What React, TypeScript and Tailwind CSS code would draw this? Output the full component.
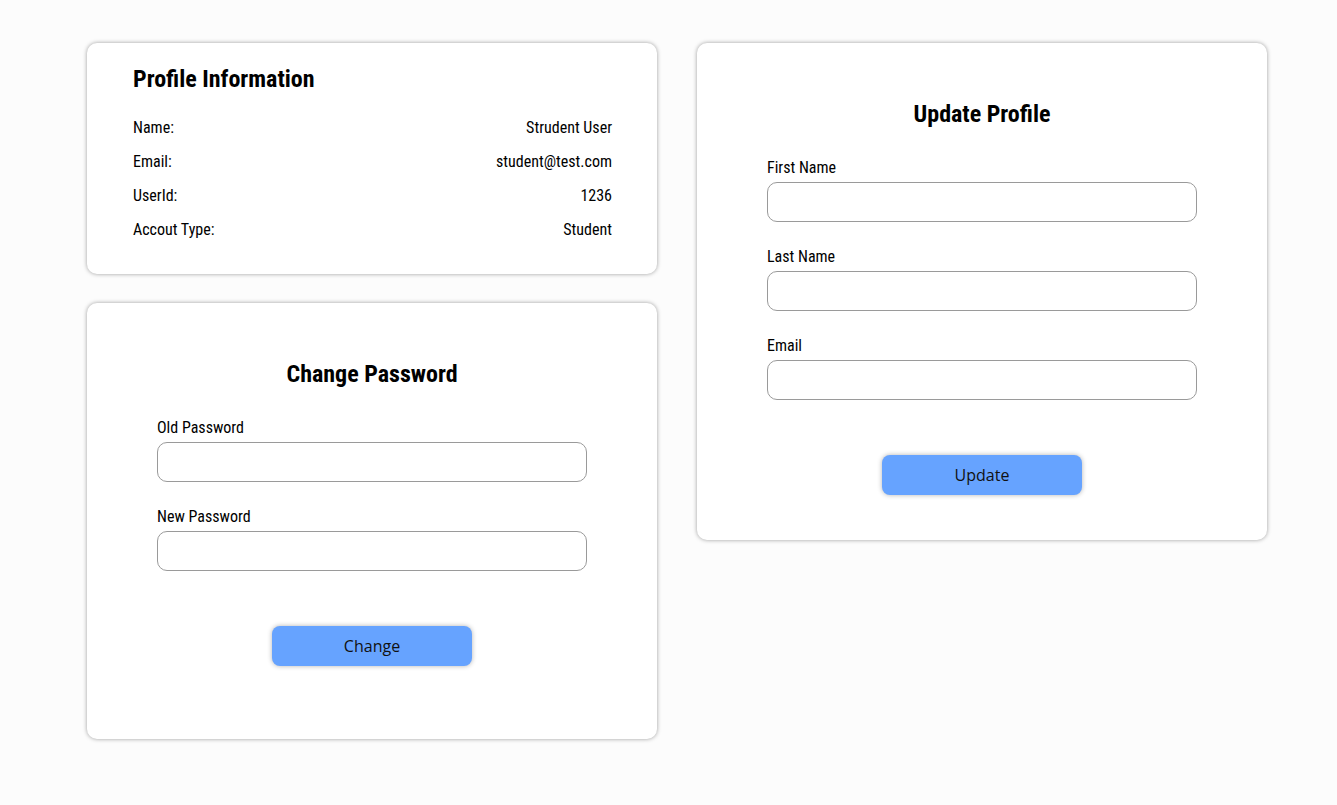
import React from "react";

const cond = { fontFamily: '"Roboto Condensed", Roboto, sans-serif', fontStretch: "75%" } as React.CSSProperties;

function Field({ label }: { label: string }) {
  return (
    <div className="flex flex-col">
      <label className="text-[16px] leading-[24px] text-black mb-[2px]">{label}</label>
      <input className="h-[40px] w-[430px] rounded-[10px] border border-[#9a9a9a] bg-white px-3 outline-none" />
    </div>
  );
}

function Btn({ children }: { children: React.ReactNode }) {
  return (
    <button
      className="h-[40px] w-[200px] rounded-[8px] bg-[#66a3ff] text-[16px] text-[#111] shadow-[0_0_5px_rgba(0,0,0,0.3)]"
      style={{ fontFamily: '"Open Sans", "Noto Sans", sans-serif', fontStretch: "88%" }}
    >
      {children}
    </button>
  );
}

const card = "rounded-[10px] bg-white shadow-[0_0_4px_rgba(0,0,0,0.38)]";

export default function App() {
  const rows: [string, string][] = [
    ["Name:", "Strudent User"],
    ["Email:", "student@test.com"],
    ["UserId:", "1236"],
    ["Accout Type:", "Student"],
  ];
  return (
    <div className="min-h-[805px] w-full bg-[#fcfcfc] pl-[87px] pt-[43px] text-black" style={cond}>
      <div className="flex gap-[40px] items-start">
        <div className="flex flex-col gap-[29px] w-[570px]">
          <div className={`${card} pl-[46px] pr-[45px] pt-[20px] pb-[32px]`}>
            <h2 className="text-[24px] leading-[32px] font-bold">Profile Information</h2>
            <div className="mt-[21px] flex flex-col gap-[10px]">
              {rows.map(([k, v]) => (
                <div key={k} className="flex justify-between text-[16px] leading-[24px]">
                  <span>{k}</span>
                  <span>{v}</span>
                </div>
              ))}
            </div>
          </div>
          <div className={`${card} pt-[55px] pb-[73px] flex flex-col items-center`}>
            <h2 className="text-[24px] leading-[32px] font-bold">Change Password</h2>
            <div className="mt-[26px] flex flex-col gap-[23px]">
              <Field label="Old Password" />
              <Field label="New Password" />
            </div>
            <div className="mt-[55px]">
              <Btn>Change</Btn>
            </div>
          </div>
        </div>
        <div className={`${card} w-[570px] pt-[55px] pb-[45px] flex flex-col items-center`}>
          <h2 className="text-[24px] leading-[32px] font-bold">Update Profile</h2>
          <div className="mt-[26px] flex flex-col gap-[23px]">
            <Field label="First Name" />
            <Field label="Last Name" />
            <Field label="Email" />
          </div>
          <div className="mt-[55px]">
            <Btn>Update</Btn>
          </div>
        </div>
      </div>
    </div>
  );
}
